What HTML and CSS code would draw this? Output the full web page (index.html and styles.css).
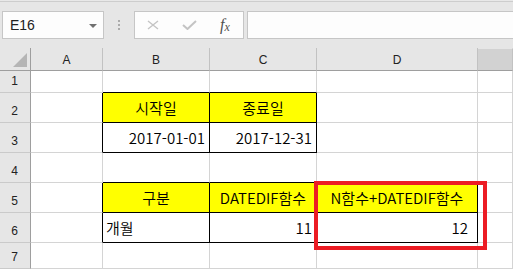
FILE: index.html
```
<!DOCTYPE html>
<html lang="ko">
  <head>
    <meta charset="UTF-8" />
    <meta name="viewport" content="width=device-width, initial-scale=1.0" />
    <title>DATEDIF</title>
    <link rel="stylesheet" href="styles.css">
  </head>
  <body>
    <div class="toolbar">
      <div class="name-box">
        <span class="name">E16</span>
        <span class="caret"></span>
      </div>
      <div class="grip"><i></i><i></i><i></i></div>
      <div class="fx-box">
        <span class="fx-btn">
          <svg width="12" height="10" viewBox="0 0 12 10"><path d="M1 1 L11 9 M11 1 L1 9" stroke="#c4c4c4" stroke-width="1.4" fill="none"/></svg>
        </span>
        <span class="fx-btn">
          <svg width="15" height="10" viewBox="0 0 15 10"><path d="M1 5 L5.5 9 L14 1" stroke="#c4c4c4" stroke-width="2" fill="none"/></svg>
        </span>
        <span class="fx-btn fx">f<span class="x">x</span></span>
      </div>
      <div class="formula"></div>
    </div>

    <div class="sheet">
      <div class="hd corner"></div>
      <div class="hd col">A</div>
      <div class="hd col">B</div>
      <div class="hd col">C</div>
      <div class="hd col">D</div>
      <div class="hd col sel"></div>

      <div class="hd row">1</div>
      <div class="c"></div>
      <div class="c b-bot"></div>
      <div class="c b-bot"></div>
      <div class="c"></div>
      <div class="c"></div>

      <div class="hd row">2</div>
      <div class="c b-right"></div>
      <div class="c box yellow center">시작일</div>
      <div class="c box yellow center">종료일</div>
      <div class="c"></div>
      <div class="c"></div>

      <div class="hd row">3</div>
      <div class="c b-right"></div>
      <div class="c box num">2017-01-01</div>
      <div class="c box num">2017-12-31</div>
      <div class="c"></div>
      <div class="c"></div>

      <div class="hd row">4</div>
      <div class="c"></div>
      <div class="c b-bot"></div>
      <div class="c b-bot"></div>
      <div class="c b-bot"></div>
      <div class="c"></div>

      <div class="hd row">5</div>
      <div class="c b-right"></div>
      <div class="c box yellow center">구분</div>
      <div class="c box yellow center">DATEDIF함수</div>
      <div class="c box yellow center marked">N함수+DATEDIF함수</div>
      <div class="c"></div>

      <div class="hd row">6</div>
      <div class="c b-right"></div>
      <div class="c box txt">개월</div>
      <div class="c box num">11</div>
      <div class="c box num wide">12</div>
      <div class="c"></div>

      <div class="hd row">7</div>
      <div class="c"></div>
      <div class="c"></div>
      <div class="c"></div>
      <div class="c"></div>
      <div class="c"></div>
    </div>
  </body>
</html>
```

FILE: styles.css
```
* {
  box-sizing: border-box;
  margin: 0;
  padding: 0;
}
body {
  background-color: #fff;
  font-family: "Liberation Sans", Arial, sans-serif;
  overflow: hidden;
}
.toolbar {
  display: flex;
  align-items: flex-start;
  height: 48px;
  padding: 11px 0 0 2px;
  background: linear-gradient(#e8e8e8 1px, #cdcdcd 1px, #cdcdcd 2px, #e6e6e6 2px);
}
.name-box {
  display: flex;
  align-items: center;
  justify-content: space-between;
  width: 102px;
  height: 28px;
  padding: 0 6px 0 7px;
  background-color: #fdfdfd;
  border: 1px solid #c6c6c6;
}
.name {
  font-size: 14px;
  color: #222;
}
.caret {
  width: 0;
  height: 0;
  border-left: 4px solid transparent;
  border-right: 4px solid transparent;
  border-top: 4px solid #707070;
  margin-top: 1px;
}
.grip {
  display: flex;
  flex-direction: column;
  align-items: center;
  gap: 2px;
  width: 30px;
  padding-top: 9px;
}
.grip i {
  display: block;
  width: 2px;
  height: 2px;
  background-color: #ababab;
}
.fx-box {
  display: flex;
  width: 110px;
  height: 28px;
  margin-right: 3px;
  background-color: #fdfdfd;
  border: 1px solid #c6c6c6;
}
.fx-btn {
  display: flex;
  align-items: center;
  justify-content: center;
  width: 36px;
}
.fx {
  font-family: "Liberation Serif", serif;
  font-style: italic;
  font-size: 16px;
  color: #505050;
  padding-bottom: 1px;
}
.fx .x {
  font-size: 12px;
  margin-top: 5px;
}
.formula {
  flex: 1;
  height: 28px;
  background-color: #fdfdfd;
  border: 1px solid #c6c6c6;
  border-right: none;
}

.sheet {
  display: grid;
  grid-template-columns: 31px 72px 107px 107px 161px 1fr;
  grid-template-rows: 23px 22px 30px 30px 30px 30px 30px 26px;
}
.c {
  position: relative;
  display: flex;
  align-items: center;
  border-right: 1px solid #d4d4d4;
  border-bottom: 1px solid #d4d4d4;
  font-family: "Noto Sans CJK KR", sans-serif;
  font-size: 15px;
  font-weight: 350;
  color: #000;
  white-space: nowrap;
}
.hd {
  display: flex;
  align-items: center;
  justify-content: center;
  background-color: #e6e6e6;
  font-size: 12px;
  color: #222;
}
.hd.col {
  border-right: 1px solid #c2c2c2;
  border-bottom: 1px solid #9e9e9e;
  padding-top: 1px;
}
.hd.row {
  align-items: flex-end;
  padding: 0 1px 4px 0;
  border-right: 1px solid #9e9e9e;
  border-bottom: 1px solid #cacaca;
}
.corner {
  position: relative;
  border-right: 1px solid #9e9e9e;
  border-bottom: 1px solid #9e9e9e;
}
.corner::after {
  content: "";
  position: absolute;
  right: 3px;
  bottom: 3px;
  border-left: 14px solid transparent;
  border-bottom: 14px solid #b5b5b5;
}
.sel {
  background-color: #d2d2d2;
  border-top: 1px solid #e6e6e6;
  border-right: none;
  border-bottom: 2px solid #217346;
}
.b-right {
  border-right-color: #000;
}
.b-bot {
  border-bottom-color: #000;
}
.box {
  border-right-color: #000;
  border-bottom-color: #000;
}
.yellow {
  background-color: #ffff00;
}
.center {
  justify-content: center;
}
.num {
  justify-content: flex-end;
  padding-right: 4px;
}
.num.wide {
  padding-right: 9px;
}
.txt {
  padding-left: 3px;
}
.marked::after {
  content: "";
  position: absolute;
  left: -3px;
  top: -2px;
  width: 165px;
  height: 61px;
  border: 4px solid #ec1c24;
  z-index: 1;
}
```
